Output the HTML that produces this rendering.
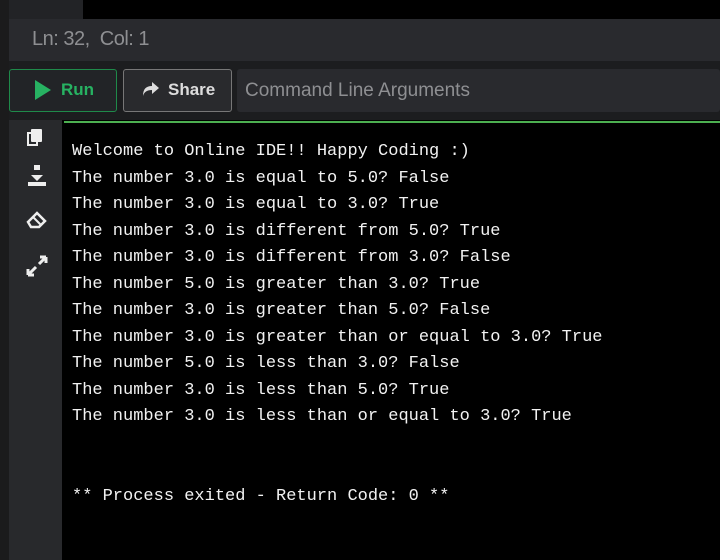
<!DOCTYPE html>
<html><head><style>
body{margin:0;width:720px;height:560px;background:#1b1b1c;position:relative;overflow:hidden;font-family:"Liberation Sans",sans-serif}
.a{position:absolute}
</style></head><body>
<div class="a" style="left:9px;top:0;width:711px;height:19px;background:#000"></div>
<div class="a" style="left:9px;top:0;width:74px;height:19px;background:#222326"></div>
<div class="a" style="left:9px;top:19px;width:711px;height:42px;background:#292a2e"></div>
<div class="a" style="left:32px;top:28px;color:#8e8f92;font-size:20px;letter-spacing:-0.5px">Ln: 32,&nbsp; Col: 1</div>
<div class="a" style="left:9px;top:61px;width:711px;height:59px;background:#1c1d1f"></div>
<div class="a" style="left:9px;top:69px;width:106px;height:41px;border:1px solid #1f8a4a;border-radius:3px;background:#222427"></div>
<svg class="a" style="left:35px;top:80px" width="18" height="20"><polygon points="0,0 16,10 0,20" fill="#27b262"/></svg>
<div class="a" style="left:61px;top:80px;color:#27b262;font-weight:bold;font-size:17px">Run</div>
<div class="a" style="left:123px;top:69px;width:107px;height:41px;border:1px solid #777;border-radius:3px;background:#292a2d"></div>
<svg class="a" style="left:142px;top:81px" width="18" height="16"><path d="M10 1 L17 7 L10 13 L10 9 C5 9 2 11 1 15 C1 8 4 5 10 5 Z" fill="#ddd"/></svg>
<div class="a" style="left:168px;top:80px;color:#ddd;font-weight:bold;font-size:17px">Share</div>
<div class="a" style="left:237px;top:69px;width:483px;height:43px;background:#292a2e;border-radius:3px"></div>
<div class="a" style="left:245px;top:80px;color:#8e8f92;font-size:19px">Command Line Arguments</div>
<div class="a" style="left:9px;top:120px;width:53px;height:440px;background:#28292c"></div>
<div class="a" style="left:62px;top:120px;width:658px;height:440px;background:#000"></div>
<div class="a" style="left:64px;top:121px;width:656px;height:2px;background:#4caf50"></div>
<svg class="a" style="left:25px;top:127px" width="24" height="150" fill="#eee">
<rect x="6" y="2" width="11" height="13" rx="1"/><rect x="3" y="6" width="9" height="12" fill="none" stroke="#eee" stroke-width="2"/>
<path d="M9 43 h6 v-5 h-6z M6 48 L12 54 L18 48z M3 55 h18 v4 h-18z"/>
<path d="M3 95 L12 86 L20 94 L14 100 H6z" fill="none" stroke="#eee" stroke-width="2.5"/><path d="M8 90 L16 98" stroke="#eee" stroke-width="2"/>
<path d="M3 148 L11 140 M14 137 L21 130 M3 148 v-6 M3 148 h6 M21 130 v6 M21 130 h-6" stroke="#eee" stroke-width="3" fill="none"/>
</svg>
<pre class="a" style="left:72px;top:139px;margin:0;color:#f2f2f2;font-family:'Liberation Mono',monospace;font-size:17px;line-height:26.55px">Welcome to Online IDE!! Happy Coding :)
The number 3.0 is equal to 5.0? False
The number 3.0 is equal to 3.0? True
The number 3.0 is different from 5.0? True
The number 3.0 is different from 3.0? False
The number 5.0 is greater than 3.0? True
The number 3.0 is greater than 5.0? False
The number 3.0 is greater than or equal to 3.0? True
The number 5.0 is less than 3.0? False
The number 3.0 is less than 5.0? True
The number 3.0 is less than or equal to 3.0? True


** Process exited - Return Code: 0 **</pre>
</body></html>
